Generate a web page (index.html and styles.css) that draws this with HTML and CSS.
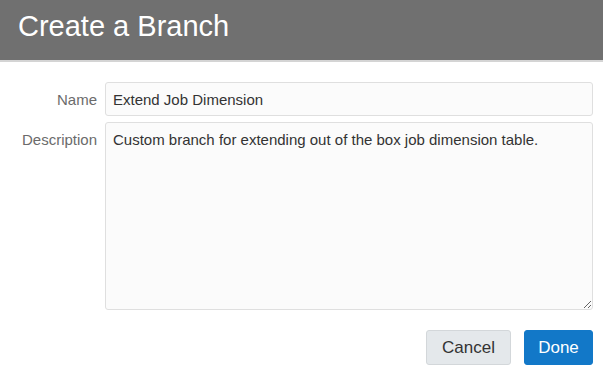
FILE: index.html
```html
<!DOCTYPE html>
<html lang="en">
<head>
<meta charset="UTF-8">
<title>Create a Branch</title>
<link rel="stylesheet" href="styles.css">
</head>
<body>
<div class="dialog">
    <div class="dialog-header">
        <h1>Create a Branch</h1>
    </div>
    <div class="dialog-body">
        <div class="form-row">
            <label for="name">Name</label>
            <input type="text" id="name" value="Extend Job Dimension">
        </div>
        <div class="form-row">
            <label for="desc">Description</label>
            <textarea id="desc">Custom branch for extending out of the box job dimension table.</textarea>
        </div>
    </div>
    <div class="dialog-footer">
        <button class="btn cancel-btn">Cancel</button>
        <button class="btn done-btn">Done</button>
    </div>
</div>
</body>
</html>
```

FILE: styles.css
```css
body {
    margin: 0;
    font-family: "Liberation Sans", Arial, sans-serif;
    background-color: #fff;
}

.dialog-header {
    height: 60px;
    background-color: #707070;
    border-bottom: 2px solid #d4d4d4;
    padding: 0 18px;
    display: flex;
    align-items: center;
}

.dialog-header h1 {
    margin: 0;
    font-size: 29px;
    font-weight: normal;
    color: #fff;
    padding-bottom: 8px;
}

.dialog-body {
    padding: 20px 10px 0 0;
}

.form-row {
    display: flex;
    align-items: flex-start;
    margin-bottom: 6px;
}

.form-row label {
    width: 105px;
    flex-shrink: 0;
    text-align: right;
    padding-right: 8px;
    padding-top: 9px;
    font-size: 15px;
    color: #6b6b6b;
    box-sizing: border-box;
}

.form-row input,
.form-row textarea {
    flex: 1;
    margin: 0;
    border: 1px solid #dfdfdf;
    border-radius: 3px;
    background-color: #fbfbfb;
    font-family: "Liberation Sans", Arial, sans-serif;
    font-size: 15px;
    color: #333;
    padding: 0 7px;
    box-sizing: border-box;
}

.form-row input {
    height: 34px;
}

.form-row textarea {
    height: 188px;
    padding-top: 8px;
    line-height: 18px;
}

.dialog-footer {
    display: flex;
    justify-content: flex-end;
    gap: 13px;
    padding: 14px 10px 0 0;
}

.btn {
    height: 35px;
    border-radius: 3px;
    font-family: "Liberation Sans", Arial, sans-serif;
    font-size: 17px;
    padding: 0;
    cursor: pointer;
}

.cancel-btn {
    width: 85px;
    background-color: #e4e8eb;
    border: 1px solid #d3d7da;
    color: #333;
}

.done-btn {
    width: 69px;
    background-color: #1278c8;
    border: 1px solid #1278c8;
    color: #fff;
}
```
